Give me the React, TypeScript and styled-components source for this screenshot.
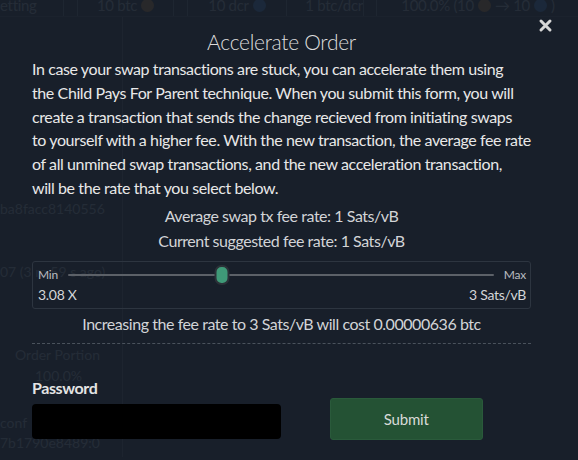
import React from "react";
import styled, { createGlobalStyle } from "styled-components";

const GlobalStyle = createGlobalStyle`
  html, body { margin: 0; padding: 0; }
  body {
    background: #18202a;
    font-family: Lato, "Open Sans", sans-serif;
    color: #e4e4e4;
  }
`;

const Page = styled.div`
  position: relative;
  width: 578px;
  height: 460px;
  overflow: hidden;
  background: #18202a;
`;

/* ---------- faint page behind the modal ---------- */
const BgTable = styled.div`
  display: flex;
  margin-top: -6px;
  height: 22px;
  border-bottom: 1px solid #2a3440;
`;

const BgCell = styled.div<{ $w: number; $align?: string }>`
  width: ${(p) => p.$w}px;
  flex: none;
  display: flex;
  align-items: center;
  justify-content: ${(p) => p.$align ?? "center"};
  gap: 4px;
  font-size: 15px;
  letter-spacing: -0.3px;
  color: #707c8a;
  border-right: 1px solid #445060;
  white-space: nowrap;
  overflow: hidden;
`;

const BgCoin = styled.span<{ $c: string }>`
  width: 13px;
  height: 13px;
  border-radius: 50%;
  background: ${(p) => p.$c};
  display: inline-block;
`;

const BgBody = styled.div`
  display: flex;
  height: 440px;
`;

const BgSide = styled.div`
  width: 122px;
  border-right: 1px solid #38424f;
  display: flex;
  flex-direction: column;
  font-size: 14px;
  color: #6c7886;
  white-space: nowrap;
`;

const BgLine = styled.div<{ $top: number; $indent?: number }>`
  margin-top: ${(p) => p.$top}px;
  padding-left: ${(p) => p.$indent ?? 0}px;
  line-height: 18px;
`;

/* ---------- modal ---------- */
const Overlay = styled.div`
  position: absolute;
  inset: 0;
  background: rgba(24, 32, 42, 0.86);
`;

const CloseBtn = styled.div`
  position: absolute;
  top: 17px;
  left: 538px;
  width: 15px;
  height: 15px;
  color: #d6d6d6;
  cursor: pointer;
`;

const Content = styled.div`
  width: 499px;
  margin-left: 32px;
  padding-top: 28px;
  display: flex;
  flex-direction: column;
`;

const Title = styled.div`
  font-size: 21px;
  font-weight: 300;
  line-height: 28px;
  letter-spacing: -0.3px;
  text-align: center;
  color: #dcdcdc;
`;

const Para = styled.p`
  margin: 1px 0 3px;
  font-size: 16px;
  line-height: 23.8px;
  letter-spacing: -0.4px;
  color: #e8e8e8;
`;

const ParaLine = styled.span`
  display: block;
  white-space: nowrap;
`;

const CenterLine = styled.div`
  font-size: 16px;
  line-height: 25px;
  letter-spacing: -0.45px;
  text-align: center;
  color: #d2d4d7;
`;

const SliderBox = styled.div`
  margin-top: 8px;
  margin-bottom: 2px;
  height: 48px;
  box-sizing: border-box;
  border: 1px solid #2d3540;
  border-radius: 3px;
  padding: 3px 4px 0 5px;
  display: flex;
  flex-direction: column;
`;

const SliderRow = styled.div`
  display: flex;
  align-items: center;
  height: 20px;
  gap: 10px;
`;

const SmallLabel = styled.span`
  font-size: 12px;
  letter-spacing: -0.2px;
  color: #b9bcc0;
`;

const Track = styled.div`
  position: relative;
  flex: 1;
  height: 2px;
  background: #5c6168;
  border-radius: 1px;
`;

const Thumb = styled.div<{ $pct: number }>`
  position: absolute;
  top: 50%;
  left: ${(p) => p.$pct}%;
  width: 11px;
  height: 16px;
  transform: translate(-50%, -50%);
  background: #3f9a78;
  border: 2px solid #2b3138;
  border-radius: 7px;
`;

const ValueRow = styled.div`
  display: flex;
  justify-content: space-between;
  align-items: center;
  height: 20px;
  font-size: 14px;
  letter-spacing: -0.3px;
  color: #d3d5d8;
`;

const CostLine = styled(CenterLine)`
  padding-bottom: 7px;
  border-bottom: 1px dashed #4a525c;
`;

const FormRow = styled.div`
  margin-top: 32px;
  display: grid;
  grid-template-columns: 1fr 1fr;
  align-items: end;
`;

const Field = styled.div`
  display: flex;
  flex-direction: column;
`;

const Label = styled.label`
  font-size: 16px;
  font-weight: 700;
  line-height: 24px;
  letter-spacing: -0.4px;
  color: #e4e4e4;
`;

const PwInput = styled.input`
  margin-top: 4px;
  width: 249px;
  height: 35px;
  box-sizing: border-box;
  background: #000;
  border: none;
  border-radius: 4px;
  outline: none;
`;

const SubmitBtn = styled.button`
  justify-self: center;
  width: 153px;
  height: 42px;
  margin-bottom: -1px;
  background: #245234;
  border: 1px solid #2a5a3b;
  border-radius: 3px;
  color: #d8dad8;
  font-family: inherit;
  font-size: 15px;
  letter-spacing: -0.2px;
`;

const paragraph = [
  "In case your swap transactions are stuck, you can accelerate them using",
  "the Child Pays For Parent technique. When you submit this form, you will",
  "create a transaction that sends the change recieved from initiating swaps",
  "to yourself with a higher fee. With the new transaction, the average fee rate",
  "of all unmined swap transactions, and the new acceleration transaction,",
  "will be the rate that you select below.",
];

export default function App() {
  return (
    <Page>
      <GlobalStyle />
      <BgTable>
        <BgCell $w={63} $align="flex-start">etting</BgCell>
        <BgCell $w={13} />
        <BgCell $w={95}>10 btc <BgCoin $c="#8a5a2a" /></BgCell>
        <BgCell $w={13} />
        <BgCell $w={98}>10 dcr <BgCoin $c="#2a5a9a" /></BgCell>
        <BgCell $w={76} $align="flex-end">1 btc/dcr</BgCell>
        <BgCell $w={12} />
        <BgCell $w={202}>100.0% (10 <BgCoin $c="#8a5a2a" /> → 10 <BgCoin $c="#2a5a9a" />)</BgCell>
        <BgCell $w={9} />
        <BgCell $w={40}>0.</BgCell>
      </BgTable>
      <BgBody>
        <BgSide>
          <BgLine $top={183}>ba8facc8140556</BgLine>
          <BgLine $top={45}>07 (3 m 59 s ago)</BgLine>
          <BgLine $top={65} $indent={15}>Order Portion</BgLine>
          <BgLine $top={3} $indent={35}>100.0%</BgLine>
          <BgLine $top={29}>conf</BgLine>
          <BgLine $top={2}>7b1790e8489:0</BgLine>
        </BgSide>
      </BgBody>

      <Overlay>
        <CloseBtn>
          <svg width="15" height="15" viewBox="0 0 15 15">
            <path d="M3 3 L12 12 M12 3 L3 12" stroke="currentColor" strokeWidth="3" strokeLinecap="round" />
          </svg>
        </CloseBtn>
        <Content>
          <Title>Accelerate Order</Title>
          <Para>
            {paragraph.map((line) => (
              <ParaLine key={line}>{line}</ParaLine>
            ))}
          </Para>
          <CenterLine>Average swap tx fee rate: 1 Sats/vB</CenterLine>
          <CenterLine>Current suggested fee rate: 1 Sats/vB</CenterLine>
          <SliderBox>
            <SliderRow>
              <SmallLabel>Min</SmallLabel>
              <Track>
                <Thumb $pct={36.2} />
              </Track>
              <SmallLabel>Max</SmallLabel>
            </SliderRow>
            <ValueRow>
              <span>3.08 X</span>
              <span>3 Sats/vB</span>
            </ValueRow>
          </SliderBox>
          <CostLine>Increasing the fee rate to 3 Sats/vB will cost 0.00000636 btc</CostLine>
          <FormRow>
            <Field>
              <Label htmlFor="pw">Password</Label>
              <PwInput id="pw" type="password" />
            </Field>
            <SubmitBtn>Submit</SubmitBtn>
          </FormRow>
        </Content>
      </Overlay>
    </Page>
  );
}
